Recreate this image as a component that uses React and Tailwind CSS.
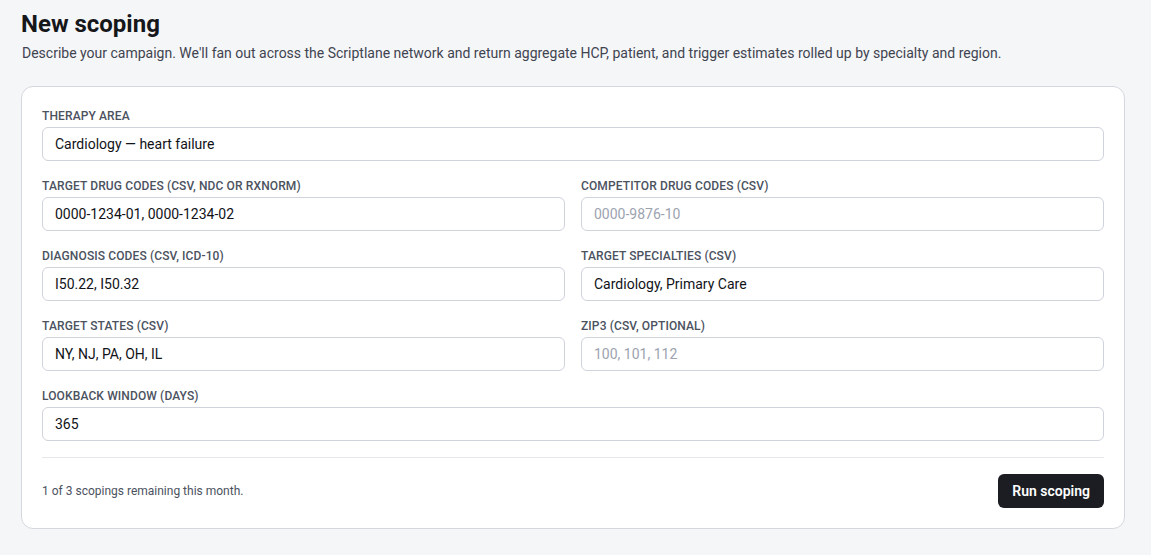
const fields = [
  { label: 'Therapy area', value: 'Cardiology — heart failure', full: true },
  { label: 'Target drug codes (CSV, NDC or RxNorm)', value: '0000-1234-01, 0000-1234-02' },
  { label: 'Competitor drug codes (CSV)', placeholder: '0000-9876-10' },
  { label: 'Diagnosis codes (CSV, ICD-10)', value: 'I50.22, I50.32' },
  { label: 'Target specialties (CSV)', value: 'Cardiology, Primary Care' },
  { label: 'Target states (CSV)', value: 'NY, NJ, PA, OH, IL' },
  { label: 'ZIP3 (CSV, optional)', placeholder: '100, 101, 112' },
  { label: 'Lookback window (days)', value: '365', full: true },
];

function Field({ label, value, placeholder, full }) {
  return (
    <label className={full ? 'col-span-2 block' : 'block'}>
      <div className="mb-[3px] text-xs font-medium uppercase leading-4 tracking-[0.01em] text-[#4b5260]">{label}</div>
      <input
        defaultValue={value}
        placeholder={placeholder}
        className="h-[34px] w-full rounded-md border border-[#cfd3dc] bg-white px-3 text-sm text-[#111318] placeholder:text-[#9ca3af] outline-none"
      />
    </label>
  );
}

export default function App() {
  return (
    <div className="min-h-screen bg-[#f5f6f8] pl-[21px] pr-[26px] pt-2 text-[#111318]" style={{ fontFamily: 'Roboto, "Liberation Sans", sans-serif' }}>
      <h1 className="text-2xl font-bold leading-8 text-[#16171b]">New scoping</h1>
      <p className="mt-[3px] pl-[1px] text-sm leading-5 text-[#3f4450]">
        Describe your campaign. We'll fan out across the Scriptlane network and return aggregate HCP, patient, and trigger estimates rolled up by specialty and region.
      </p>

      <div className="mt-[23px] rounded-xl border border-[#d4d7de] bg-white px-5 pb-5 pt-[21px]">
        <div className="grid grid-cols-2 gap-x-4 gap-y-[17px]">
          {fields.map((f) => (
            <Field key={f.label} {...f} />
          ))}
        </div>
        <div className="mt-4 flex items-center justify-between border-t border-[#e5e7eb] pt-4">
          <div className="text-xs text-[#4b5260]">1 of 3 scopings remaining this month.</div>
          <button className="h-[34px] rounded-md bg-[#1b1d22] px-[14px] text-sm font-semibold text-white">Run scoping</button>
        </div>
      </div>
    </div>
  );
}
